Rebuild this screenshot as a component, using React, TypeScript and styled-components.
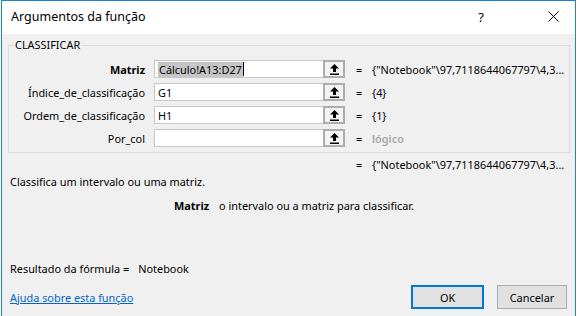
import React from "react";
import styled, { createGlobalStyle } from "styled-components";

const GlobalStyle = createGlobalStyle`
  html, body {
    margin: 0;
    padding: 0;
    background: #ffffff;
  }
  body {
    font-family: "Noto Sans", "Open Sans", Arial, sans-serif;
    font-size: 10.9px;
    color: #000000;
  }
`;

const args = [
  { name: "Matriz", value: "Cálculo!A13:D27", result: '{"Notebook"\\97,7118644067797\\4,3...', bold: true, selected: true },
  { name: "Índice_de_classificação", value: "G1", result: "{4}" },
  { name: "Ordem_de_classificação", value: "H1", result: "{1}" },
  { name: "Por_col", value: "", result: "lógico", hint: true },
];

export default function App() {
  return (
    <>
      <GlobalStyle />
      <Window>
        <TitleBar>
          <Title>Argumentos da função</Title>
          <TitleButtons>
            <HelpGlyph>?</HelpGlyph>
            <CloseIcon width="11" height="11" viewBox="0 0 11 11">
              <path d="M0.5 0.5 L10.5 10.5 M10.5 0.5 L0.5 10.5" stroke="#000" strokeWidth="1" fill="none" />
            </CloseIcon>
          </TitleButtons>
        </TitleBar>

        <Body>
          <GroupBox>
            <Legend>CLASSIFICAR</Legend>
            <ArgGrid>
              {args.map((a) => (
                <React.Fragment key={a.name}>
                  <ArgLabel $bold={a.bold}>{a.name}</ArgLabel>
                  <Field>
                    <FieldText>
                      {a.selected ? (
                        <>
                          <Selected>{a.value}</Selected>
                          <Caret />
                        </>
                      ) : (
                        a.value
                      )}
                    </FieldText>
                    <RefButton>
                      <svg width="9" height="11" viewBox="0 0 9 11">
                        <path d="M4.5 0 L9 4.5 L6 4.5 L6 8 L3 8 L3 4.5 L0 4.5 Z" fill="#000" />
                        <rect x="0" y="9.5" width="9" height="1.5" fill="#000" />
                      </svg>
                    </RefButton>
                  </Field>
                  <Equals>=</Equals>
                  <ArgValue $hint={a.hint}>{a.result}</ArgValue>
                </React.Fragment>
              ))}
            </ArgGrid>
          </GroupBox>

          <ResultLine>
            <Equals>=</Equals>
            <ArgValue>{'{"Notebook"\\97,7118644067797\\4,3...'}</ArgValue>
          </ResultLine>

          <Description>Classifica um intervalo ou uma matriz.</Description>

          <ArgHelp>
            <strong>Matriz</strong>
            <span>o intervalo ou a matriz para classificar.</span>
          </ArgHelp>

          <FormulaResult>
            <span>Resultado da fórmula =</span>
            <span>Notebook</span>
          </FormulaResult>

          <Footer>
            <HelpLink href="#">Ajuda sobre esta função</HelpLink>
            <Buttons>
              <DialogButton $primary>OK</DialogButton>
              <DialogButton>Cancelar</DialogButton>
            </Buttons>
          </Footer>
        </Body>
      </Window>
    </>
  );
}

const Window = styled.div`
  box-sizing: border-box;
  width: 575px;
  height: 316px;
  margin-left: 1px;
  border: 1px solid #1883d7;
  border-bottom: none;
  background: #f0f0f0;
  display: flex;
  flex-direction: column;
`;

const TitleBar = styled.div`
  height: 33px;
  flex-shrink: 0;
  background: #ffffff;
  display: flex;
  align-items: center;
  justify-content: space-between;
  padding-left: 9px;
`;

const Title = styled.div`
  font-size: 12.5px;
  margin-top: -2px;
`;

const TitleButtons = styled.div`
  display: flex;
  align-items: center;
  gap: 64px;
  padding-right: 16px;
  margin-top: -2px;
`;

const HelpGlyph = styled.span`
  font-size: 13px;
`;

const CloseIcon = styled.svg`
  display: block;
`;

const Body = styled.div`
  flex: 1;
  display: flex;
  flex-direction: column;
  padding: 4px 0 0 0;
`;

const GroupBox = styled.fieldset`
  margin: 0 5px 0 6px;
  padding: 8px 0 5px 0;
  border: 1px solid #dcdcdc;
  min-width: 0;
`;

const Legend = styled.legend`
  padding: 0 1px;
  margin-left: 5px;
  font-size: 10.9px;
  line-height: 14px;
`;

const ArgGrid = styled.div`
  display: grid;
  grid-template-columns: 145px 191px 27px 1fr;
  grid-auto-rows: 18px;
  row-gap: 5px;
  align-items: center;
`;

const ArgLabel = styled.div<{ $bold?: boolean }>`
  text-align: right;
  padding-right: 9px;
  white-space: nowrap;
  font-weight: ${(p) => (p.$bold ? 700 : 400)};
`;

const Field = styled.div`
  box-sizing: border-box;
  height: 18px;
  display: flex;
  background: #ffffff;
  border: 1px solid #c8c8c8;
  border-right: none;
`;

const FieldText = styled.div`
  flex: 1;
  display: flex;
  align-items: center;
  padding-left: 3px;
  white-space: nowrap;
  overflow: hidden;
`;

const Selected = styled.span`
  background: #c6c6c6;
  padding: 0 1px;
`;

const Caret = styled.span`
  display: inline-block;
  width: 1px;
  height: 14px;
  background: #000;
`;

const RefButton = styled.div`
  box-sizing: border-box;
  width: 22px;
  height: 18px;
  margin-top: -1px;
  display: flex;
  align-items: center;
  justify-content: center;
  background: #f4f4f4;
  border: 2px solid #adadad;
`;

const Equals = styled.div`
  padding-left: 11px;
`;

const ArgValue = styled.div<{ $hint?: boolean }>`
  white-space: nowrap;
  color: ${(p) => (p.$hint ? "#a8a8a8" : "#000")};
  font-weight: ${(p) => (p.$hint ? 600 : 400)};
`;

const ResultLine = styled.div`
  display: grid;
  grid-template-columns: 27px 1fr;
  padding-left: 343px;
  margin-top: 4px;
`;

const Description = styled.div`
  padding-left: 8px;
  margin-top: 2px;
`;

const ArgHelp = styled.div`
  display: flex;
  gap: 10px;
  padding-left: 172px;
  margin-top: 9px;
`;

const FormulaResult = styled.div`
  display: flex;
  gap: 9px;
  padding-left: 8px;
  margin-top: auto;
`;

const Footer = styled.div`
  display: flex;
  align-items: center;
  justify-content: space-between;
  padding: 9px 8px 7px 8px;
`;

const HelpLink = styled.a`
  color: #0066cc;
  text-decoration: underline;
`;

const Buttons = styled.div`
  display: flex;
  gap: 13px;
`;

const DialogButton = styled.button<{ $primary?: boolean }>`
  box-sizing: border-box;
  width: ${(p) => (p.$primary ? "73px" : "70px")};
  height: 24px;
  font-family: inherit;
  font-size: 10.9px;
  color: #000;
  background: #e1e1e1;
  border: ${(p) => (p.$primary ? "2px solid #0078d7" : "1px solid #adadad")};
  padding: 0;
`;
